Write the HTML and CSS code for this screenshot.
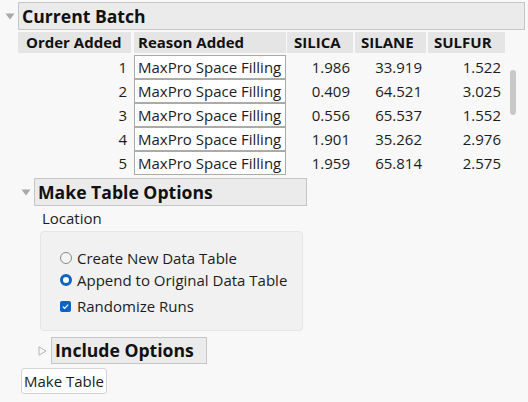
FILE: index.html
```html
<!DOCTYPE html>
<html>
<head>
<meta charset="utf-8">
<link rel="stylesheet" href="styles.css">
</head>
<body>
<div class="page">
  <div class="ol-head">
    <span class="tog"><svg width="10" height="7" viewBox="0 0 10 7"><path d="M0.5 0.5 L9.5 0.5 L5 6.5 Z" fill="#a8a8a8"/></svg></span>
    <div class="ol-title cb">Current Batch</div>
  </div>

  <div class="batch">
    <div class="grid">
      <div class="hd h1">Order Added</div>
      <div class="hd h2">Reason Added</div>
      <div class="hd h3">SILICA</div>
      <div class="hd h4">SILANE</div>
      <div class="hd h5">SULFUR</div>

      <div class="num n1">1</div><div class="rs"><span class="box">MaxPro Space Filling</span></div><div class="num n3">1.986</div><div class="num n4">33.919</div><div class="num n5">1.522</div>
      <div class="num n1">2</div><div class="rs"><span class="box">MaxPro Space Filling</span></div><div class="num n3">0.409</div><div class="num n4">64.521</div><div class="num n5">3.025</div>
      <div class="num n1">3</div><div class="rs"><span class="box">MaxPro Space Filling</span></div><div class="num n3">0.556</div><div class="num n4">65.537</div><div class="num n5">1.552</div>
      <div class="num n1">4</div><div class="rs"><span class="box">MaxPro Space Filling</span></div><div class="num n3">1.901</div><div class="num n4">35.262</div><div class="num n5">2.976</div>
      <div class="num n1">5</div><div class="rs"><span class="box">MaxPro Space Filling</span></div><div class="num n3">1.959</div><div class="num n4">65.814</div><div class="num n5">2.575</div>
    </div>
    <div class="scroll"></div>
  </div>

  <div class="ol-head mto">
    <span class="tog"><svg width="10" height="7" viewBox="0 0 10 7"><path d="M0.5 0.5 L9.5 0.5 L5 6.5 Z" fill="#a8a8a8"/></svg></span>
    <div class="ol-title mt">Make Table Options</div>
  </div>

  <div class="mto-body">
    <div class="loc">Location</div>
    <div class="panel">
      <label class="opt"><span class="radio"></span>Create New Data Table</label>
      <label class="opt"><span class="radio on"></span>Append to Original Data Table</label>
      <label class="opt chk"><span class="check"><svg width="11" height="11" viewBox="0 0 11 11"><path d="M2.8 5.6 L4.6 7.3 L8.2 3.7" fill="none" stroke="#fff" stroke-width="1.2"/></svg></span>Randomize Runs</label>
    </div>
    <div class="ol-head inc">
      <span class="tog tr"><svg width="9" height="10" viewBox="0 0 9 10"><path d="M1 0.8 L8 5 L1 9.2 Z" fill="none" stroke="#b4b4b4" stroke-width="1"/></svg></span>
      <div class="ol-title io">Include Options</div>
    </div>
  </div>

  <div class="btn-row"><button class="btn">Make Table</button></div>
</div>
</body>
</html>
```

FILE: styles.css
```css
html, body {
  margin: 0;
  padding: 0;
  background: #f8f8f8;
}
body {
  font-family: "Open Sans", "Noto Sans", sans-serif;
  font-size: 15px;
  color: #1c1c1c;
  width: 528px;
  height: 402px;
  overflow: hidden;
}
.page {
  padding-top: 2px;
}
.ol-head {
  display: flex;
  align-items: center;
}
.tog {
  display: flex;
  align-items: center;
  justify-content: center;
}
.ol-title {
  box-sizing: border-box;
  height: 28px;
  line-height: 26px;
  background: #ebebeb;
  border: 1px solid #c6c6c6;
  font-weight: 700;
  font-size: 17.6px;
  color: #111;
  padding-left: 3px;
  white-space: nowrap;
}
.ol-head:first-child .tog {
  width: 18px;
  padding-left: 1px;
  box-sizing: border-box;
}
.cb {
  width: 507px;
}
.batch {
  position: relative;
  margin-top: 2px;
  padding-left: 18px;
}
.grid {
  display: grid;
  grid-template-columns: 116px 153px 68px 73px 77px;
  grid-auto-rows: 24px;
  grid-template-rows: 23px;
}
.hd {
  box-sizing: border-box;
  height: 21px;
  line-height: 21px;
  background: #e5e5e5;
  font-weight: 700;
  font-size: 15px;
  color: #111;
  white-space: nowrap;
}
.h1 { width: 113px; padding-left: 8px; }
.h2 { width: 152px; padding-left: 4px; }
.h3 { width: 66px; padding-left: 7px; }
.h4 { width: 71px; padding-left: 6px; }
.h5 { width: 77px; padding-left: 6px; }
.num {
  text-align: right;
  line-height: 24px;
}
.n1 { padding-right: 7px; }
.n3 { padding-right: 5px; }
.n4 { padding-right: 6px; }
.n5 { padding-right: 4px; }
.rs {
  display: flex;
}
.box {
  box-sizing: border-box;
  width: 152px;
  height: 24px;
  line-height: 22px;
  background: #fff;
  border: 1px solid #aaa;
  padding-left: 3px;
  white-space: nowrap;
  overflow: hidden;
}
.scroll {
  position: absolute;
  left: 510px;
  top: 38px;
  width: 6px;
  height: 45px;
  border-radius: 3px;
  background: #c8c8c8;
}
.mto {
  margin-top: 3px;
}
.mto .tog {
  width: 34px;
  padding-left: 18px;
  box-sizing: border-box;
}
.mt {
  width: 273px;
}
.mto-body {
  padding-left: 40px;
}
.loc {
  padding-left: 2px;
  margin-top: 2px;
  height: 21px;
  line-height: 21px;
}
.panel {
  box-sizing: border-box;
  width: 263px;
  height: 100px;
  margin-top: 2px;
  background: #f1f1f1;
  border: 1px solid #e5e5e5;
  border-radius: 4px;
  padding: 15px 0 0 19px;
}
.opt {
  display: flex;
  align-items: center;
  height: 22px;
  white-space: nowrap;
}
.opt.chk {
  margin-top: 4px;
}
.radio {
  box-sizing: border-box;
  width: 12px;
  height: 12px;
  border-radius: 50%;
  border: 1px solid #8a8a8a;
  background: #f4f4f4;
  margin-right: 5px;
  flex: none;
}
.radio.on {
  border: 3px solid #0b63c5;
  background: #fff;
}
.check {
  width: 11px;
  height: 11px;
  border-radius: 2px;
  background: #0b63c5;
  margin-right: 6px;
  display: flex;
  flex: none;
}
.inc {
  margin-top: 6px;
  margin-left: -3px;
}
.inc .tog {
  width: 14px;
  justify-content: flex-start;
  box-sizing: border-box;
  padding-left: 1px;
}
.io {
  width: 156px;
  height: 27px;
  line-height: 25px;
}
.btn-row {
  padding-left: 21px;
  margin-top: 4px;
}
.btn {
  box-sizing: border-box;
  width: 86px;
  height: 26px;
  background: #fff;
  border: 1px solid #d4d4d4;
  border-radius: 3px;
  font-family: inherit;
  font-size: 15px;
  color: #1c1c1c;
  padding: 0;
}
```
